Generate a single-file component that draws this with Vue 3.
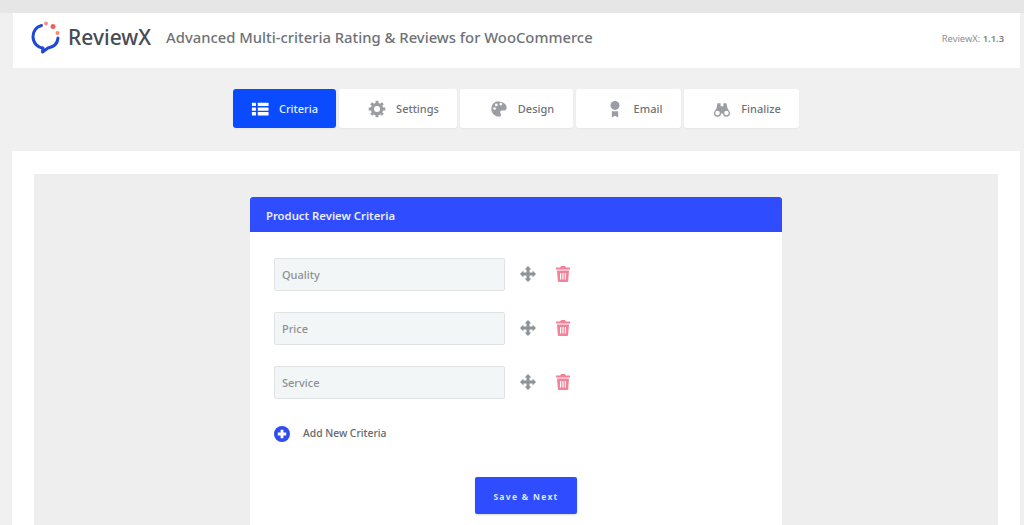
<script setup>
const tabs = [
  { name: 'Criteria', icon: 'list', w: 103, active: true },
  { name: 'Settings', icon: 'gear', w: 118 },
  { name: 'Design', icon: 'palette', w: 113 },
  { name: 'Email', icon: 'award', w: 105 },
  { name: 'Finalize', icon: 'binoculars', w: 115 }
]
const criteria = ['Quality', 'Price', 'Service']
</script>

<template>
  <div class="page">
    <div class="strip"></div>
    <header class="header">
      <div class="brand">
        <svg class="logo" viewBox="0 0 32 34" width="32" height="34">
          <path d="M10.500 4.500C5 6 2 10.500 2 15.500c0 6.500 4.500 11 10 11.500l-.5 4 5.500-4c5.500-1 9.500-4.500 10-10" fill="none" stroke="#1f48d8" stroke-width="3" stroke-linecap="round" stroke-linejoin="round"/>
          <circle cx="15" cy="2.500" r="1.900" fill="#f58a8a"/>
          <circle cx="22" cy="5.500" r="2.500" fill="#f0605c"/>
          <circle cx="26.500" cy="12" r="2" fill="#f58a70"/>
        </svg>
        <span class="brand-name">ReviewX</span>
      </div>
      <span class="tagline">Advanced Multi-criteria Rating &amp; Reviews for WooCommerce</span>
      <span class="version">ReviewX: <b>1.1.3</b></span>
    </header>

    <nav class="tabs">
      <button v-for="t in tabs" :key="t.name" class="tab" :class="{ active: t.active }" :style="{ width: t.w + 'px' }">
        <svg class="tab-icon" viewBox="0 0 20 20" width="18" height="18">
          <g v-if="t.icon === 'list'" fill="currentColor">
            <rect x="1" y="3" width="4.500" height="3.800" rx=".6"/><rect x="7.500" y="3" width="12" height="3.800" rx=".6"/>
            <rect x="1" y="8.200" width="4.500" height="3.800" rx=".6"/><rect x="7.500" y="8.200" width="12" height="3.800" rx=".6"/>
            <rect x="1" y="13.400" width="4.500" height="3.800" rx=".6"/><rect x="7.500" y="13.400" width="12" height="3.800" rx=".6"/>
          </g>
          <g v-else-if="t.icon === 'gear'">
            <circle cx="10" cy="10" r="5.200" fill="none" stroke="currentColor" stroke-width="3.600"/>
            <path d="M10 .8v18.400M.8 10h18.400M3.500 3.500l13 13M16.500 3.500l-13 13" stroke="currentColor" stroke-width="3.200" stroke-dasharray="3 12.400" fill="none"/>
          </g>
          <path v-else-if="t.icon === 'palette'" fill="currentColor" fill-rule="evenodd" d="M10 1.500c-5 0-8.500 3.800-8.500 8.500s3.800 8.500 8.500 8.500c1.500 0 2.300-1 2.300-2.100 0-1.400-1-1.700-1-2.900 0-1 .8-1.700 1.800-1.700h2.400c2 0 3-1.500 3-3.200 0-3.800-3.700-6.600-8.500-6.600zM5 11a1.500 1.500 0 1 1 0-3 1.500 1.500 0 0 1 0 3zm2-4a1.500 1.500 0 1 1 0-3 1.500 1.500 0 0 1 0 3zm5-1a1.500 1.500 0 1 1 0-3 1.500 1.500 0 0 1 0 3z"/>
          <g v-else-if="t.icon === 'award'" fill="currentColor">
            <circle cx="10" cy="6" r="5"/>
            <path d="M6.500 12.500h7V19.500L10 17.500l-3.500 2z"/>
          </g>
          <g v-else fill="currentColor" fill-rule="evenodd">
            <path d="M5 3.500h3.500V7h3V3.500H15l1 5.500 3 5a4 4 0 1 1-8 1H9a4 4 0 1 1-8-1l3-5zM5 12a2.500 2.500 0 1 0 0 5 2.500 2.500 0 0 0 0-5zm10 0a2.500 2.500 0 1 0 0 5 2.500 2.500 0 0 0 0-5z"/>
          </g>
        </svg>
        <span>{{ t.name }}</span>
      </button>
    </nav>

    <main class="panel">
      <div class="inner">
        <section class="card">
          <h2 class="card-title">Product Review Criteria</h2>
          <div class="card-body">
            <div v-for="c in criteria" :key="c" class="row">
              <div class="field">{{ c }}</div>
              <svg class="move" viewBox="0 0 16 16" width="16" height="16">
                <path fill="#8d9499" d="M8 0l3.400 3.400H9.500v3.100h3.100V4.600L16 8l-3.400 3.400V9.500H9.500v3.100h1.900L8 16l-3.400-3.400h1.900V9.500H3.400v1.900L0 8l3.400-3.400v1.900h3.100V3.400H4.600z"/>
              </svg>
              <svg class="trash" viewBox="0 0 14 16" width="14" height="16">
                <path fill="#f4819a" fill-rule="evenodd" d="M5 0h4l.8 1.500H14V3.500H0V1.500h4.200zM1 4.500h12l-.8 10.200c-.1.800-.6 1.300-1.400 1.300H3.200c-.8 0-1.300-.5-1.400-1.300zM4 7v6.500h1.200V7zm2.400 0v6.500h1.200V7zm2.400 0v6.500H10V7z"/>
              </svg>
            </div>
            <div class="add">
              <svg viewBox="0 0 16 16" width="16" height="16">
                <circle cx="8" cy="8" r="8" fill="#2f4cf0"/>
                <path d="M8 3.800v8.400M3.800 8h8.400" stroke="#fff" stroke-width="2.800"/>
              </svg>
              <span>Add New Criteria</span>
            </div>
            <div class="actions">
              <button class="save">Save &amp; Next</button>
            </div>
          </div>
        </section>
      </div>
    </main>
  </div>
</template>

<style scoped>
.page {
  width: 1024px;
  height: 525px;
  overflow: hidden;
  background: #f0f0f0;
  font-family: "Noto Sans", "Open Sans", sans-serif;
  display: flex;
  flex-direction: column;
}
.strip { height: 13px; background: #e6e6e6; flex: none; }
.header {
  flex: none;
  height: 55px;
  margin: 0 4px 0 13px;
  background: #fff;
  display: flex;
  align-items: center;
  padding: 0 16px 7px 18px;
  box-sizing: border-box;
}
.brand { display: flex; align-items: center; gap: 5px; }
.logo { margin-top: 1px; }
.brand-name { font-size: 21px; font-weight: 500; color: #464b54; }
.tagline { margin-left: 15px; font-size: 14.800px; font-weight: 500; color: #6e7278; }
.version { margin-left: auto; font-size: 9.400px; color: #8f8f8f; padding-top: 3px; }
.version b { font-weight: 600; color: #7c7e81; }
.tabs {
  flex: none;
  display: flex;
  gap: 3px;
  margin: 21px 0 23px 233px;
  height: 39px;
}
.tab {
  height: 39px;
  border: 0;
  border-radius: 3px;
  background: #fff;
  color: #6e7277;
  font: 500 11px "Noto Sans", "Open Sans", sans-serif;
  display: flex;
  align-items: center;
  justify-content: center;
  gap: 10px;
  padding: 0 0 0 11px;
  box-shadow: 0 1px 2px rgba(0,0,0,.04);
}
.tab .tab-icon { color: #9a9ea4; }
.tab.active { background: #0a4bff; color: #e8eeff; padding: 0; }
.tab.active .tab-icon { color: #fff; }
.panel {
  flex: 1;
  margin: 0 4px 0 12px;
  background: #fff;
  padding: 23px 22px 0;
  display: flex;
  min-height: 0;
}
.inner {
  flex: 1;
  background: #eeeeee;
  padding: 23px 216px 0;
  min-height: 0;
}
.card { background: #fff; height: 340px; }
.card-title {
  margin: 0;
  height: 35px;
  line-height: 37px;
  padding-left: 16px;
  background: #2f4cff;
  border-radius: 3px 3px 0 0;
  color: #e9edff;
  font-size: 11.300px;
  font-weight: 600;
}
.card-body { padding: 26px 24px 0; }
.row { display: flex; align-items: center; height: 32.500px; margin-bottom: 21.500px; }
.field {
  width: 231px;
  height: 100%;
  box-sizing: border-box;
  background: #f2f6f6;
  border: 1px solid #dfe3e4;
  border-radius: 2px;
  font-size: 11px;
  font-weight: 500;
  color: #8c9195;
  display: flex;
  align-items: center;
  padding-left: 7px;
}
.move { margin-left: 15px; }
.trash { margin-left: 20px; }
.add {
  display: flex;
  align-items: center;
  gap: 13px;
  margin-top: 27px;
  font-size: 10.300px;
  font-weight: 500;
  color: #63676d;
}
.add span { position: relative; top: -1px; }
.actions { display: flex; margin: 35px 0 0 201px; }
.save {
  width: 102px;
  height: 37px;
  border: 0;
  border-radius: 2px;
  background: #2f4cff;
  color: #dfe5ff;
  font: 700 8.500px "Noto Sans", "Open Sans", sans-serif;
  letter-spacing: 1.300px;
  padding: 2px 0 0;
  box-shadow: 0 1px 2px rgba(0,0,0,.15);
}
</style>
